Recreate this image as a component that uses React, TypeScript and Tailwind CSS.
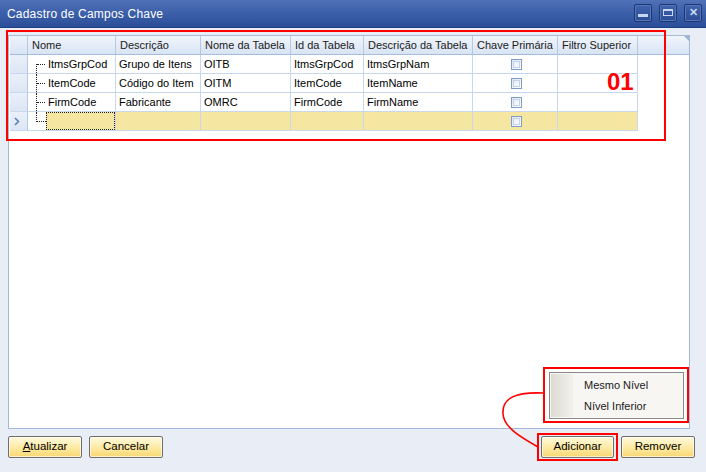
import type { ReactNode } from "react";

const COLS = [
  { key: "nome", label: "Nome", w: "w-[88px]" },
  { key: "desc", label: "Descrição", w: "w-[85px]" },
  { key: "tab", label: "Nome da Tabela", w: "w-[90px]" },
  { key: "id", label: "Id da Tabela", w: "w-[73px]" },
  { key: "descTab", label: "Descrição da Tabela", w: "w-[109px]" },
  { key: "chave", label: "Chave Primária", w: "w-[85px]" },
  { key: "filtro", label: "Filtro Superior", w: "w-[80px]" },
];

const ROWS = [
  { nome: "ItmsGrpCod", desc: "Grupo de Itens", tab: "OITB", id: "ItmsGrpCod", descTab: "ItmsGrpNam" },
  { nome: "ItemCode", desc: "Código do Item", tab: "OITM", id: "ItemCode", descTab: "ItemName" },
  { nome: "FirmCode", desc: "Fabricante", tab: "OMRC", id: "FirmCode", descTab: "FirmName" },
];

const FONT = "font-['Liberation_Sans',Arial,sans-serif]";

function Checkbox() {
  return (
    <div className="w-[11px] h-[11px] border border-[#7f9cc8] bg-gradient-to-br from-[#dfe7f3] to-[#ffffff] p-px">
      <div className="w-full h-full border border-[#c4d3ea] bg-gradient-to-br from-[#e8eef8] to-[#fbfcfe]" />
    </div>
  );
}

// tree connector drawn in the indent of the Nome column
function Tree({ pos }: { pos: "first" | "mid" | "last" }) {
  return (
    <div className="relative w-[18px] h-full shrink-0">
      <div
        className={
          "absolute left-[8px] border-l border-dotted border-[#222] " +
          (pos === "first" ? "top-[9px] bottom-0" : pos === "mid" ? "top-0 bottom-0" : "top-0 h-[10px]")
        }
      />
      <div
        className={
          "absolute left-[9px] top-[9px] border-t border-dotted border-[#222] " +
          (pos === "last" ? "w-[9px]" : "w-[8px]")
        }
      />
    </div>
  );
}

function Cell({ w, children, className = "" }: { w: string; children?: ReactNode; className?: string }) {
  return (
    <div className={`${w} shrink-0 h-full border-r border-[#c6d7ee] flex items-center pl-[3px] overflow-hidden whitespace-nowrap ${className}`}>
      {children}
    </div>
  );
}

function Button({ children, w = "w-[74px]" }: { children: ReactNode; w?: string }) {
  return (
    <button
      type="button"
      className={`${w} h-[22px] rounded-[2px] border border-[#6e6e6e] bg-gradient-to-b from-[#fff9dc] via-[#fdeba6] to-[#f8d771] text-[11.5px] text-black shadow-[inset_0_0_0_1px_rgba(255,255,255,0.6)] flex items-center justify-center`}
    >
      {children}
    </button>
  );
}

function WinButton({ children }: { children: ReactNode }) {
  return (
    <div className="w-[18px] h-[18px] rounded-[2px] border border-[#1d3770] bg-gradient-to-b from-[#3f63ad] to-[#2c4d96] shadow-[inset_0_0_0_1px_#5576b8] flex items-center justify-center">
      {children}
    </div>
  );
}

export default function App() {
  return (
    <div className={`relative w-[706px] h-[472px] overflow-hidden bg-[#e8edf6] flex flex-col ${FONT}`}>
      {/* title bar */}
      <div className="h-[28px] shrink-0 bg-gradient-to-b from-[#5071b7] via-[#3b5fa9] to-[#2c4e98] border-b border-[#203f80] flex items-center pl-[7px] pr-[4px]">
        <span className="text-white text-[12px] tracking-[0.2px]">Cadastro de Campos Chave</span>
        <div className="ml-auto flex gap-[7px] -mt-[2px]">
          <WinButton>
            <div className="w-[10px] h-[3px] bg-[#c9d6ef] mt-[5px]" />
          </WinButton>
          <WinButton>
            <div className="w-[10px] h-[7px] border border-[#c9d6ef] border-t-2" />
          </WinButton>
          <WinButton>
            <span className="text-[#c9d6ef] text-[11px] font-bold leading-none">✕</span>
          </WinButton>
        </div>
      </div>

      {/* grid panel */}
      <div className="flex-1 flex flex-col pl-2 pr-4 pt-[7px]">
        <div className="flex-1 border border-[#a3bad9] bg-white pl-px text-[11px] text-black">
          {/* header */}
          <div className="flex h-[19px] border-b border-[#a5bddd]">
            <div className="w-[18px] shrink-0 h-full border-r border-[#b5c9e4] bg-gradient-to-b from-[#eef3fa] to-[#d8e4f4]" />
            {COLS.map((c) => (
              <div
                key={c.key}
                className={`${c.w} shrink-0 h-full border-r border-[#b5c9e4] bg-gradient-to-b from-[#f1f5fb] to-[#d8e4f4] flex items-center pl-[4px] whitespace-nowrap text-[#1b1b1b]`}
              >
                {c.label}
              </div>
            ))}
            <div className="relative flex-1 h-full bg-gradient-to-b from-[#f1f5fb] to-[#d8e4f4]">
              <div className="absolute right-0 top-0 w-0 h-0 border-l-[5px] border-l-transparent border-t-[5px] border-t-[#9db3d3]" />
            </div>
          </div>

          {/* data rows */}
          {ROWS.map((r, i) => (
            <div key={r.nome} className="flex h-[19px] border-b border-[#c6d7ee] w-fit">
              <div className="w-[18px] shrink-0 h-full border-r border-[#b5c9e4] bg-gradient-to-b from-[#eaf0f9] to-[#dce6f4]" />
              <div className="w-[88px] shrink-0 h-full border-r border-[#c6d7ee] flex items-center">
                <Tree pos={i === 0 ? "first" : "mid"} />
                <span className="pl-[2px] whitespace-nowrap">{r.nome}</span>
              </div>
              <Cell w="w-[85px]" className="pl-[2px]">{r.desc}</Cell>
              <Cell w="w-[90px]">{r.tab}</Cell>
              <Cell w="w-[73px]">{r.id}</Cell>
              <Cell w="w-[109px]">{r.descTab}</Cell>
              <Cell w="w-[85px]" className="justify-center pl-0">
                <Checkbox />
              </Cell>
              <Cell w="w-[80px]" />
            </div>
          ))}

          {/* new row */}
          <div className="flex h-[19px] border-b border-[#c6d7ee] w-fit">
            <div className="w-[18px] shrink-0 h-full border-r border-[#b5c9e4] bg-gradient-to-b from-[#eaf0f9] to-[#dce6f4] flex items-center pl-[4px]">
              <svg width="6" height="9" viewBox="0 0 6 9">
                <path d="M1 1 L4.5 4.5 L1 8" fill="none" stroke="#5c80b8" strokeWidth="1.6" />
              </svg>
            </div>
            <div className="w-[88px] shrink-0 h-full border-r border-[#c6d7ee] flex items-center">
              <Tree pos="last" />
              <div className="flex-1 h-full border border-dotted border-[#222] bg-[#f5e6a2]" />
            </div>
            <Cell w="w-[85px]" className="bg-[#f5e6a2]" />
            <Cell w="w-[90px]" className="bg-[#f5e6a2]" />
            <Cell w="w-[73px]" className="bg-[#f5e6a2]" />
            <Cell w="w-[109px]" className="bg-[#f5e6a2]" />
            <Cell w="w-[85px]" className="bg-[#f5e6a2] justify-center pl-0">
              <Checkbox />
            </Cell>
            <Cell w="w-[80px]" className="bg-[#f5e6a2]" />
          </div>
        </div>
      </div>

      {/* footer buttons */}
      <div className="h-[22px] shrink-0 mt-[7px] mb-[14px] flex items-center pl-2 pr-[11px]">
        <div className="flex gap-[7px]">
          <Button>
            <span>
              <span className="underline">A</span>tualizar
            </span>
          </Button>
          <Button>Cancelar</Button>
        </div>
        <div className="ml-auto flex gap-[7px]">
          <Button w="w-[73px]">Adicionar</Button>
          <Button>Remover</Button>
        </div>
      </div>

      {/* context menu over the grid */}
      <div className="absolute left-[549px] top-[372px] w-[135px] h-[47px] border border-[#8a8a8a] bg-[#f7f6f3] flex p-px text-[11px] text-[#1a1a1a]">
        <div className="w-[22px] h-full bg-gradient-to-r from-[#dedbd3] to-[#f1f0ec]" />
        <div className="flex flex-col pl-[11px] pt-[1px]">
          <div className="h-[22px] flex items-center">Mesmo Nível</div>
          <div className="h-[22px] flex items-center">Nível Inferior</div>
        </div>
      </div>

      {/* red annotations */}
      <div className="absolute left-[6px] top-[30px] w-[660px] h-[111px] border-2 border-[#ff0000] pointer-events-none" />
      <div className="absolute left-[607px] top-[70px] text-[24px] leading-none font-bold text-[#ff0000]">01</div>
      <div className="absolute left-[543px] top-[367px] w-[146px] h-[56px] border-2 border-[#ff0000] pointer-events-none" />
      <div className="absolute left-[537px] top-[433px] w-[81px] h-[28px] border-2 border-[#ff0000] pointer-events-none" />
      <svg className="absolute left-0 top-0 pointer-events-none" width="706" height="472" viewBox="0 0 706 472">
        <path
          d="M543 393 C515 392 502 398 503 414 C504 428 522 438 538 447"
          fill="none"
          stroke="#ff0000"
          strokeWidth="1.6"
        />
      </svg>
    </div>
  );
}
